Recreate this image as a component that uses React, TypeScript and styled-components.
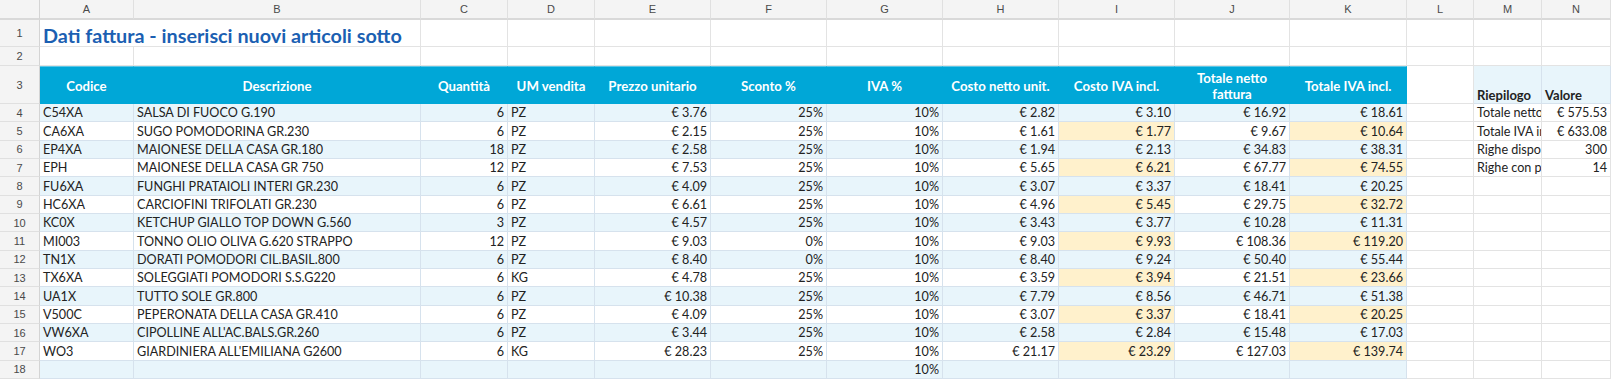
import React from "react";
import styled, { createGlobalStyle } from "styled-components";

const GlobalStyle = createGlobalStyle`
  html, body {
    margin: 0;
    padding: 0;
    background: #ffffff;
    overflow: hidden;
  }
`;

const LETTERS = ["A", "B", "C", "D", "E", "F", "G", "H", "I", "J", "K", "L", "M", "N"];
const COL_WIDTHS = [94, 287, 87, 87, 116, 116, 116, 116, 116, 115, 117, 67, 68, 69];

const HEADERS = [
  "Codice",
  "Descrizione",
  "Quantità",
  "UM vendita",
  "Prezzo unitario",
  "Sconto %",
  "IVA %",
  "Costo netto unit.",
  "Costo IVA incl.",
  "Totale netto fattura",
  "Totale IVA incl.",
];

type Item = [string, string, string, string, string, string, string, string, string, string, string];

const ITEMS: Item[] = [
  ["C54XA", "SALSA DI FUOCO G.190", "6", "PZ", "€ 3.76", "25%", "10%", "€ 2.82", "€ 3.10", "€ 16.92", "€ 18.61"],
  ["CA6XA", "SUGO POMODORINA GR.230", "6", "PZ", "€ 2.15", "25%", "10%", "€ 1.61", "€ 1.77", "€ 9.67", "€ 10.64"],
  ["EP4XA", "MAIONESE DELLA CASA GR.180", "18", "PZ", "€ 2.58", "25%", "10%", "€ 1.94", "€ 2.13", "€ 34.83", "€ 38.31"],
  ["EPH", "MAIONESE DELLA CASA GR 750", "12", "PZ", "€ 7.53", "25%", "10%", "€ 5.65", "€ 6.21", "€ 67.77", "€ 74.55"],
  ["FU6XA", "FUNGHI PRATAIOLI INTERI GR.230", "6", "PZ", "€ 4.09", "25%", "10%", "€ 3.07", "€ 3.37", "€ 18.41", "€ 20.25"],
  ["HC6XA", "CARCIOFINI TRIFOLATI GR.230", "6", "PZ", "€ 6.61", "25%", "10%", "€ 4.96", "€ 5.45", "€ 29.75", "€ 32.72"],
  ["KC0X", "KETCHUP GIALLO TOP DOWN G.560", "3", "PZ", "€ 4.57", "25%", "10%", "€ 3.43", "€ 3.77", "€ 10.28", "€ 11.31"],
  ["MI003", "TONNO OLIO OLIVA G.620 STRAPPO", "12", "PZ", "€ 9.03", "0%", "10%", "€ 9.03", "€ 9.93", "€ 108.36", "€ 119.20"],
  ["TN1X", "DORATI POMODORI CIL.BASIL.800", "6", "PZ", "€ 8.40", "0%", "10%", "€ 8.40", "€ 9.24", "€ 50.40", "€ 55.44"],
  ["TX6XA", "SOLEGGIATI POMODORI S.S.G220", "6", "KG", "€ 4.78", "25%", "10%", "€ 3.59", "€ 3.94", "€ 21.51", "€ 23.66"],
  ["UA1X", "TUTTO SOLE GR.800", "6", "PZ", "€ 10.38", "25%", "10%", "€ 7.79", "€ 8.56", "€ 46.71", "€ 51.38"],
  ["V500C", "PEPERONATA DELLA CASA GR.410", "6", "PZ", "€ 4.09", "25%", "10%", "€ 3.07", "€ 3.37", "€ 18.41", "€ 20.25"],
  ["VW6XA", "CIPOLLINE ALL'AC.BALS.GR.260", "6", "PZ", "€ 3.44", "25%", "10%", "€ 2.58", "€ 2.84", "€ 15.48", "€ 17.03"],
  ["WO3", "GIARDINIERA ALL'EMILIANA G2600", "6", "KG", "€ 28.23", "25%", "10%", "€ 21.17", "€ 23.29", "€ 127.03", "€ 139.74"],
];

const SUMMARY: [string, string][] = [
  ["Totale netto fattura", "€ 575.53"],
  ["Totale IVA incl.", "€ 633.08"],
  ["Righe disponibili", "300"],
  ["Righe con prodotti", "14"],
];

// columns aligned right in the item table
const RIGHT_COLS = [2, 4, 5, 6, 7, 8, 9, 10];

const BLUE = "#00a7d7";
const LIGHT = "#e8f5fb";
const YELLOW = "#fff1cc";
const GRID = "#e3e3e3";
const TABLE_LINE = "#d6e2ed";

const Sheet = styled.div`
  display: grid;
  grid-template-columns: 40px ${COL_WIDTHS.map((w) => `${w}px`).join(" ")};
  grid-template-rows: 20px 27px 19px 38px repeat(15, 18.35px);
  font-family: Lato, "Liberation Sans", sans-serif;
  font-size: 12.6px;
  color: #222222;
`;

const Corner = styled.div`
  background: #f4f4f4;
  border-right: 1px solid #d4d4d4;
  border-bottom: 2px solid #d9d9d9;
  box-sizing: border-box;
`;

const ColHead = styled.div`
  background: #f4f4f4;
  border-right: 1px solid #e0e0e0;
  border-bottom: 2px solid #d9d9d9;
  box-sizing: border-box;
  display: flex;
  align-items: center;
  justify-content: center;
  font-family: "Liberation Sans", Arial, sans-serif;
  font-size: 11px;
  color: #4a4a4a;
`;

const RowHead = styled.div`
  background: #f4f4f4;
  border-right: 1px solid #d4d4d4;
  border-bottom: 1px solid #e0e0e0;
  box-sizing: border-box;
  display: flex;
  align-items: center;
  justify-content: center;
  font-family: "Liberation Sans", Arial, sans-serif;
  font-size: 11px;
  color: #4a4a4a;
`;

const Cell = styled.div<{
  $bg?: string;
  $line?: string;
  $align?: "left" | "right" | "center";
  $span?: number;
}>`
  grid-column: span ${(p) => p.$span ?? 1};
  background: ${(p) => p.$bg ?? "#ffffff"};
  border-right: 1px solid ${(p) => p.$line ?? GRID};
  border-bottom: 1px solid ${(p) => p.$line ?? GRID};
  box-sizing: border-box;
  display: flex;
  align-items: flex-end;
  justify-content: ${(p) => (p.$align === "right" ? "flex-end" : p.$align === "center" ? "center" : "flex-start")};
  padding: 0 3px 0;
  white-space: nowrap;
  overflow: hidden;
  line-height: 16px;
`;

const Title = styled(Cell)`
  align-items: center;
  padding: 3px 3px 0;
  font-size: 19.8px;
  font-weight: 700;
  color: #1b5fb2;
  overflow: visible;
`;

const HeadCell = styled.div`
  background: ${BLUE};
  border-top: 1px solid #5cc6e6;
  border-right: 1px solid ${BLUE};
  box-sizing: border-box;
  display: flex;
  align-items: center;
  justify-content: center;
  text-align: center;
  padding: 1px 6px 0;
  color: #ffffff;
  font-weight: 700;
  font-size: 13.2px;
  line-height: 16px;
  white-space: normal;
`;

const SummaryHead = styled(Cell)`
  font-weight: 700;
  font-size: 13px;
  padding-bottom: 0;
`;

export default function App() {
  const emptyRow = (from: number, to: number, bg?: string, line?: string) =>
    LETTERS.slice(from, to).map((l) => <Cell key={l} $bg={bg} $line={line} />);

  return (
    <>
      <GlobalStyle />
      <Sheet>
        <Corner />
        {LETTERS.map((l) => (
          <ColHead key={l}>{l}</ColHead>
        ))}

        <RowHead>1</RowHead>
        <Title $span={2}>Dati fattura - inserisci nuovi articoli sotto</Title>
        {emptyRow(2, 14)}

        <RowHead>2</RowHead>
        {emptyRow(0, 14)}

        <RowHead>3</RowHead>
        {HEADERS.map((h) => (
          <HeadCell key={h}>{h}</HeadCell>
        ))}
        <Cell />
        <SummaryHead $bg={LIGHT} $line={TABLE_LINE}>Riepilogo</SummaryHead>
        <SummaryHead $bg={LIGHT} $line={TABLE_LINE}>Valore</SummaryHead>

        {ITEMS.map((item, r) => {
          const striped = r % 2 === 0;
          const summary = SUMMARY[r];
          return (
            <React.Fragment key={item[0]}>
              <RowHead>{r + 4}</RowHead>
              {item.map((v, c) => {
                const yellow = !striped && (c === 8 || c === 10);
                return (
                  <Cell
                    key={c}
                    $bg={yellow ? YELLOW : striped ? LIGHT : "#ffffff"}
                    $line={TABLE_LINE}
                    $align={RIGHT_COLS.includes(c) ? "right" : "left"}
                  >
                    {v}
                  </Cell>
                );
              })}
              <Cell />
              {summary ? (
                <>
                  <Cell>{summary[0]}</Cell>
                  <Cell $align="right">{summary[1]}</Cell>
                </>
              ) : (
                emptyRow(12, 14)
              )}
            </React.Fragment>
          );
        })}

        <RowHead>18</RowHead>
        {Array.from({ length: 11 }, (_, c) => (
          <Cell key={c} $bg={LIGHT} $line={TABLE_LINE} $align="right">
            {c === 6 ? "10%" : ""}
          </Cell>
        ))}
        {emptyRow(11, 14)}
      </Sheet>
    </>
  );
}
